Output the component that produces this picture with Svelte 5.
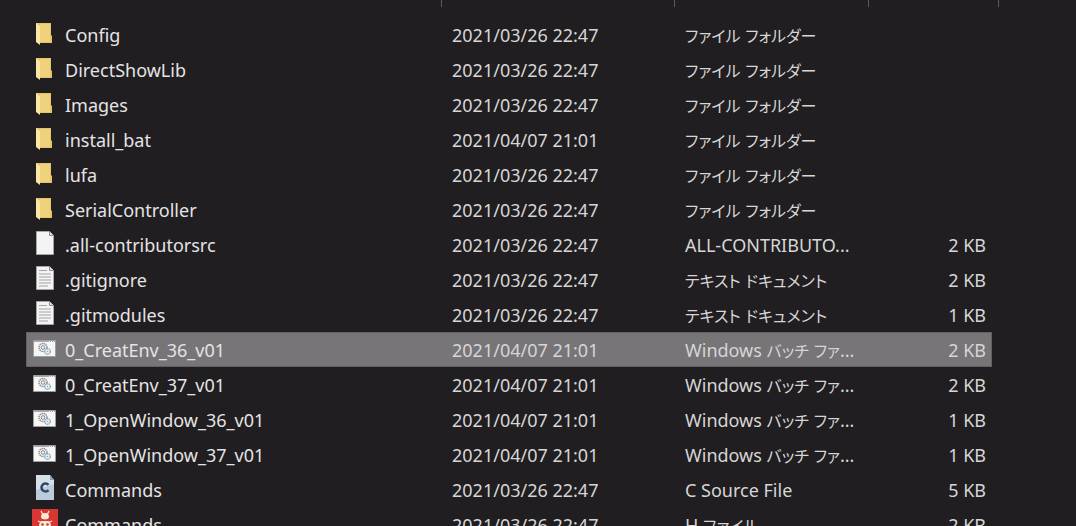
<script>
    const files = [
        { icon: 'folder', name: 'Config', date: '2021/03/26 22:47', type: 'ファイル フォルダー', size: '' },
        { icon: 'folder', name: 'DirectShowLib', date: '2021/03/26 22:47', type: 'ファイル フォルダー', size: '' },
        { icon: 'folder', name: 'Images', date: '2021/03/26 22:47', type: 'ファイル フォルダー', size: '' },
        { icon: 'folder', name: 'install_bat', date: '2021/04/07 21:01', type: 'ファイル フォルダー', size: '' },
        { icon: 'folder', name: 'lufa', date: '2021/03/26 22:47', type: 'ファイル フォルダー', size: '' },
        { icon: 'folder', name: 'SerialController', date: '2021/03/26 22:47', type: 'ファイル フォルダー', size: '' },
        { icon: 'blank', name: '.all-contributorsrc', date: '2021/03/26 22:47', type: 'ALL-CONTRIBUTO...', size: '2 KB' },
        { icon: 'text', name: '.gitignore', date: '2021/03/26 22:47', type: 'テキスト ドキュメント', size: '2 KB' },
        { icon: 'text', name: '.gitmodules', date: '2021/03/26 22:47', type: 'テキスト ドキュメント', size: '1 KB' },
        { icon: 'batch', name: '0_CreatEnv_36_v01', date: '2021/04/07 21:01', type: 'Windows バッチ ファ...', size: '2 KB' },
        { icon: 'batch', name: '0_CreatEnv_37_v01', date: '2021/04/07 21:01', type: 'Windows バッチ ファ...', size: '2 KB' },
        { icon: 'batch', name: '1_OpenWindow_36_v01', date: '2021/04/07 21:01', type: 'Windows バッチ ファ...', size: '1 KB' },
        { icon: 'batch', name: '1_OpenWindow_37_v01', date: '2021/04/07 21:01', type: 'Windows バッチ ファ...', size: '1 KB' },
        { icon: 'csource', name: 'Commands', date: '2021/03/26 22:47', type: 'C Source File', size: '5 KB' },
        { icon: 'header', name: 'Commands', date: '2021/03/26 22:47', type: 'H ファイル', size: '2 KB' },
    ];

    let selected = $state(9);

    // kana runs are set a bit smaller than the latin text
    const split = (text) => text.split(/([ァ-ヶー]+)/).filter((part) => part !== '');
    const isKana = (text) => /[ァ-ヶー]/.test(text);
</script>

{#snippet fileIcon(kind)}
    <svg class="icon" viewBox="0 0 26 35" aria-hidden="true">
        {#if kind === 'folder'}
            <path d="M4 6h15v12l1 1v7H8L4 24z" fill="#e6c368" />
            <path d="M8 7h10v18H8z" fill="#f0d27c" />
            <path d="M4 6l4 3v19l-4-3z" fill="#fbe6a4" />
        {:else if kind === 'blank' || kind === 'text'}
            <path d="M4.500 4.500h13l4 4v19h-17z" fill="#f4f4f4" stroke="#a6a6a6" />
            <path d="M17.500 4.500v4h4" fill="#ddd" stroke="#8c8c8c" />
            {#if kind === 'text'}
                <path d="M7 8.500h8M7 12h12M7 15h12M7 18h12M7 21h12M7 24h9" stroke="#a4a4a4" />
            {/if}
        {:else if kind === 'batch'}
            <path d="M1.500 8.500h22v16h-22z" fill="#f6f6f6" stroke="#9c9c9c" />
            <path d="M2 9.500h21" stroke="#aaa" />
            <path d="M17 9.500h1M19 9.500h1M21 9.500h1" stroke="#eee" />
            <circle cx="11" cy="15.500" r="4" fill="none" stroke="#909090" stroke-width="1.500" stroke-dasharray="1.500 .6" />
            <circle cx="11" cy="15.500" r="1.800" fill="none" stroke="#858585" />
            <circle cx="15.500" cy="19.500" r="2.800" fill="#edf3f8" stroke="#8ba9c4" stroke-width="1.400" stroke-dasharray="1.500 .5" />
            <circle cx="15.500" cy="19.500" r=".8" fill="#8ba9c4" />
        {:else if kind === 'csource'}
            <path d="M4 3h14l4 5v20H4z" fill="#d6e0e9" />
            <path d="M4 18l18-6v16H4z" fill="#bccbda" />
            <path d="M18 3v5h4" fill="#8fa1b3" />
            <path d="M16.500 12.800a4 4 0 1 0 0 5.400" fill="none" stroke="#34486a" stroke-width="2.600" />
        {:else}
            <path d="M0 2h26v26H0z" fill="#d83734" />
            <path d="M9 4l2 4M17 4l-2 4M6 14l4 2M20 14l-4 2M5 21h3M21 21h-3" fill="none" stroke="#f6e9d2" stroke-width="1.300" />
            <path d="M9 10a4 4 0 0 1 8 0l-1 2h-6z" fill="#f6e9d2" />
            <ellipse cx="13" cy="19.500" rx="6" ry="7" fill="#f6e9d2" />
            <path d="M9 13.500h8" stroke="#d83734" />
            <circle cx="10.500" cy="17.500" r="1.300" fill="#d83734" />
            <circle cx="15.500" cy="17.500" r="1.300" fill="#d83734" />
        {/if}
    </svg>
{/snippet}

<main>
    <table>
        <colgroup>
            <col />
            <col class="date-col" />
            <col class="type-col" />
            <col class="size-col" />
            <col class="edge-col" />
        </colgroup>
        <thead>
            <tr>
                <td><div class="divider"></div></td>
                <td><div class="divider"></div></td>
                <td><div class="divider"></div></td>
                <td colspan="2"><div class="divider"></div></td>
            </tr>
        </thead>
        <tbody>
            {#each files as file, i}
                <tr class:selected={selected === i} onclick={() => (selected = i)}>
                    <td class="name">
                        <div class="label">
                            {@render fileIcon(file.icon)}
                            <span>{file.name}</span>
                        </div>
                    </td>
                    <td class="date">{file.date}</td>
                    <td class="type">{#each split(file.type) as part}<span class:kana={isKana(part)}>{part}</span>{/each}</td>
                    <td class="size">{file.size}</td>
                </tr>
            {/each}
        </tbody>
    </table>
</main>

<style>
    :global(body) {
        margin: 0;
        background-color: #201e20;
    }

    main {
        height: 100vh;
        overflow: hidden;
        background-color: #201e20;
        color: #d6d6d6;
        font-family: "Noto Sans", "Noto Sans CJK JP", sans-serif;
        font-size: 18px;
        line-height: 31px;
    }

    table {
        width: calc(100% - 103px);
        margin-left: 26px;
        table-layout: fixed;
        border-collapse: separate;
        border-spacing: 0;
    }

    .date-col {
        width: 233px;
    }

    .type-col {
        width: 194px;
    }

    .size-col {
        width: 123px;
    }

    .edge-col {
        width: 7px;
    }

    td {
        padding: 0;
        white-space: nowrap;
    }

    .divider {
        height: 7px;
        margin-bottom: 10px;
        border-right: 1px solid #5c5a5c;
    }

    tbody td {
        height: 31px;
        padding-top: 2px;
        border-top: 1px solid transparent;
        border-bottom: 1px solid transparent;
    }

    .selected td {
        background-color: #777577;
        border-color: #626062;
    }

    .selected .name {
        box-shadow: inset 1px 0 #626062;
    }

    .selected .size {
        box-shadow: inset -1px 0 #626062;
    }

    .label {
        display: flex;
        align-items: center;
        gap: 7px;
        height: 31px;
        padding-left: 6px;
        color: #e4e4e4;
    }

    .icon {
        width: 26px;
        height: 35px;
        margin-bottom: 2px;
        flex-shrink: 0;
    }

    .date,
    .type {
        padding-left: 10px;
    }

    .kana {
        font-family: "Noto Sans CJK JP", sans-serif;
        font-size: 16px;
        font-feature-settings: "palt";
        line-height: 1;
    }

    .size {
        padding-right: 6px;
        text-align: right;
    }
</style>
